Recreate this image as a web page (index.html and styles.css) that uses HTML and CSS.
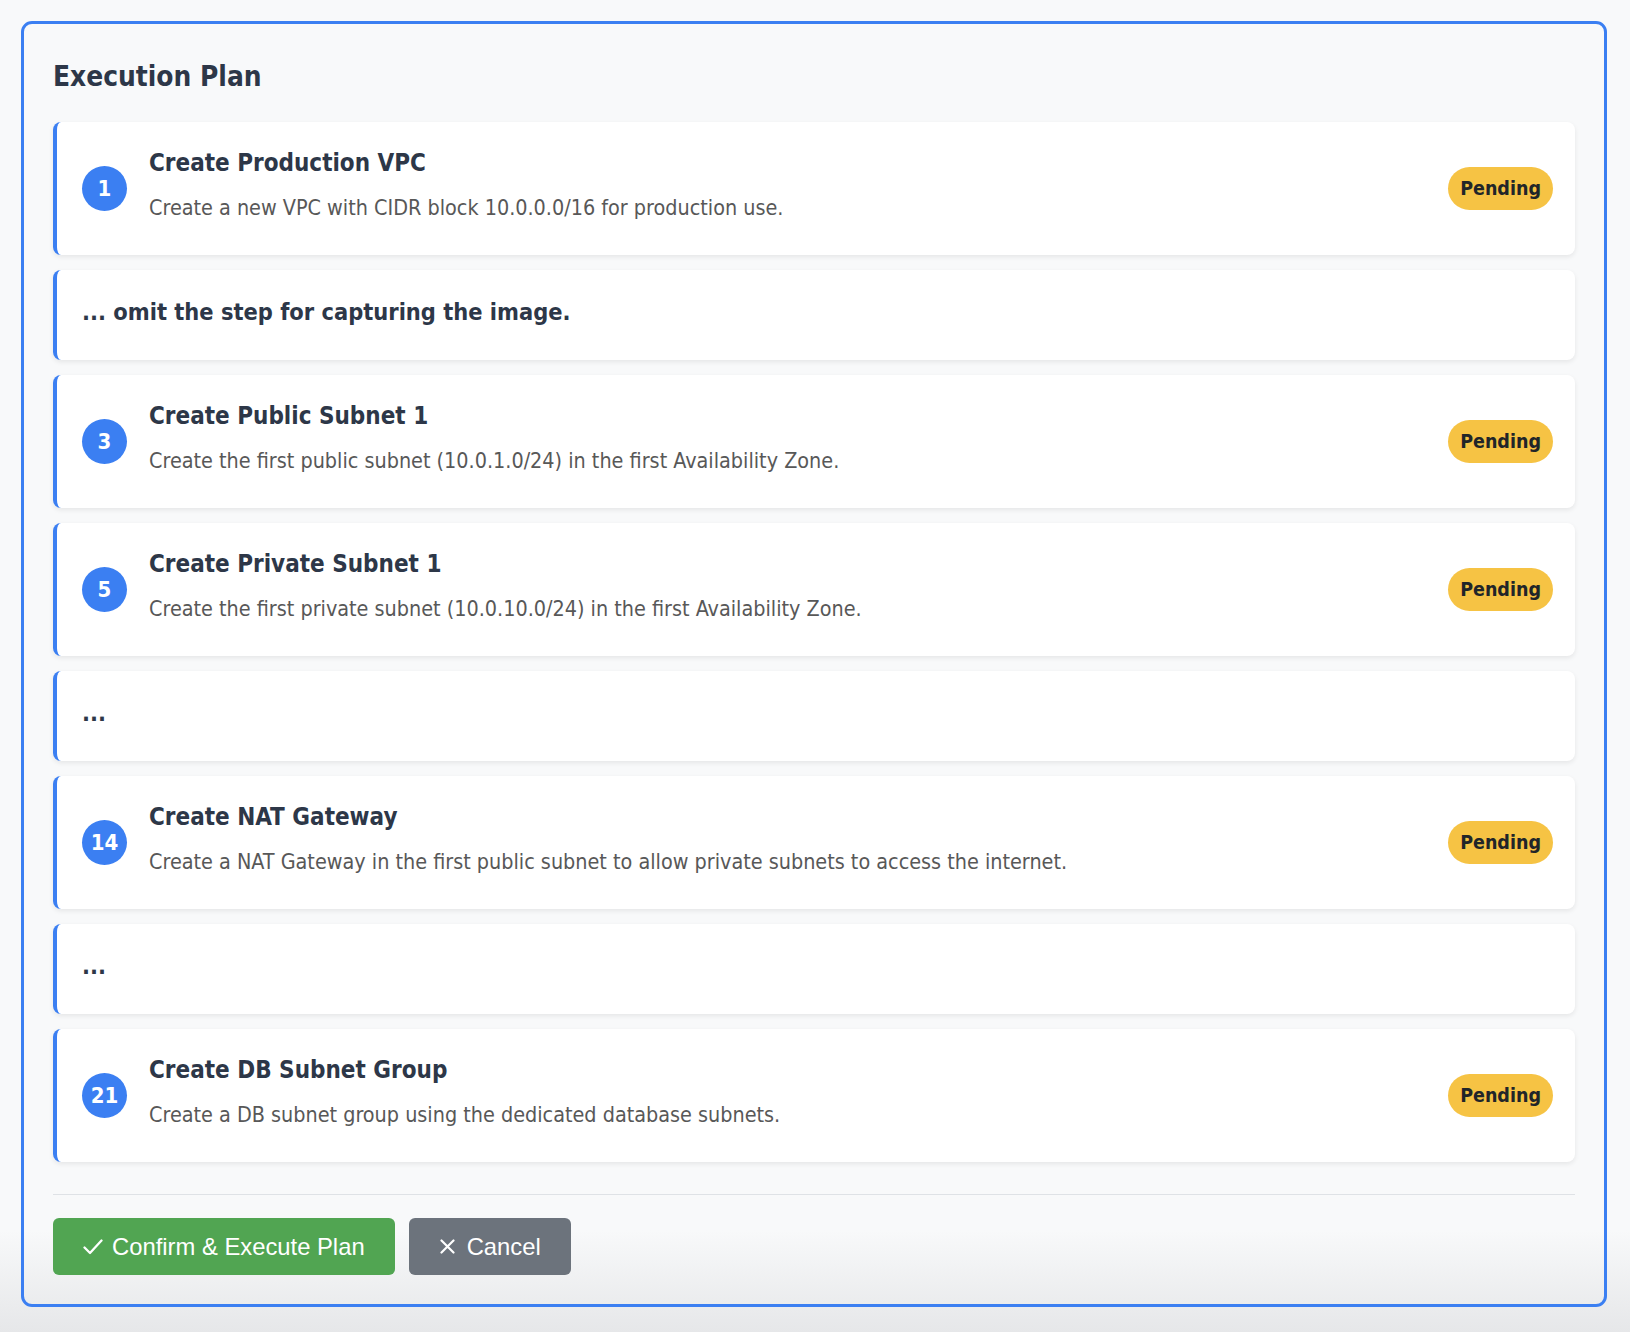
FILE: index.html
```html
<!DOCTYPE html>
<html lang="en">
<head>
<meta charset="utf-8">
<title>Execution Plan</title>
<link rel="stylesheet" href="styles.css">
</head>
<body>
<div class="plan">
  <h2 class="plan-title">Execution Plan</h2>
  <div class="steps">
    <div class="step">
      <div class="step-num">1</div>
      <div class="step-body">
        <div class="step-title">Create Production VPC</div>
        <div class="step-desc">Create a new VPC with CIDR block 10.0.0.0/16 for production use.</div>
      </div>
      <span class="badge">Pending</span>
    </div>
    <div class="step step-note">... omit the step for capturing the image.</div>
    <div class="step">
      <div class="step-num">3</div>
      <div class="step-body">
        <div class="step-title">Create Public Subnet 1</div>
        <div class="step-desc">Create the first public subnet (10.0.1.0/24) in the first Availability Zone.</div>
      </div>
      <span class="badge">Pending</span>
    </div>
    <div class="step">
      <div class="step-num">5</div>
      <div class="step-body">
        <div class="step-title">Create Private Subnet 1</div>
        <div class="step-desc">Create the first private subnet (10.0.10.0/24) in the first Availability Zone.</div>
      </div>
      <span class="badge">Pending</span>
    </div>
    <div class="step step-note">...</div>
    <div class="step">
      <div class="step-num">14</div>
      <div class="step-body">
        <div class="step-title">Create NAT Gateway</div>
        <div class="step-desc">Create a NAT Gateway in the first public subnet to allow private subnets to access the internet.</div>
      </div>
      <span class="badge">Pending</span>
    </div>
    <div class="step step-note">...</div>
    <div class="step">
      <div class="step-num">21</div>
      <div class="step-body">
        <div class="step-title">Create DB Subnet Group</div>
        <div class="step-desc">Create a DB subnet group using the dedicated database subnets.</div>
      </div>
      <span class="badge">Pending</span>
    </div>
  </div>
  <div class="actions">
    <button class="btn btn-confirm"><svg class="ico" width="20" height="16" viewBox="0 0 20 16"><path d="M1.5 8.5 L7 14 L18.5 1.5" fill="none" stroke="#fff" stroke-width="2.3" stroke-linecap="round" stroke-linejoin="round"/></svg>Confirm &amp; Execute Plan</button>
    <button class="btn btn-cancel"><svg class="ico ico-x" width="15" height="15" viewBox="0 0 15 15"><path d="M1.5 1.5 L13.5 13.5 M13.5 1.5 L1.5 13.5" fill="none" stroke="#fff" stroke-width="2.2" stroke-linecap="round"/></svg>Cancel</button>
  </div>
</div>
</body>
</html>
```
FILE: styles.css
```css
html, body {
  margin: 0;
  padding: 0;
}
body {
  min-height: 1332px;
  background: linear-gradient(to bottom, #f8f9fa 0, #f8f9fa 1230px, #e6e7e9 1332px);
  font-family: "DejaVu Sans Condensed", "DejaVu Sans", sans-serif;
  font-stretch: condensed;
  padding: 21px 23px 0 21px;
  box-sizing: border-box;
}
.plan {
  border: 3px solid #3b7ff2;
  border-radius: 11px;
  padding: 29px;
  height: 1286px;
  box-sizing: border-box;
}
.plan-title {
  margin: 8px 0 30px;
  font-size: 27.8px;
  line-height: 31px;
  font-weight: bold;
  color: #2d3748;
}
.steps {
  display: flex;
  flex-direction: column;
  gap: 15px;
}
.step {
  display: flex;
  align-items: center;
  background: #fff;
  border-left: 4px solid #3b7ff2;
  border-radius: 8px;
  box-shadow: 0 2px 5px rgba(0, 0, 0, 0.08);
  padding: 0 22px 0 25px;
  height: 133px;
  box-sizing: border-box;
}
.step-num {
  flex: none;
  width: 45px;
  height: 45px;
  border-radius: 50%;
  background: #3b7ff2;
  color: #fff;
  font-weight: bold;
  font-size: 22px;
  display: flex;
  align-items: center;
  justify-content: center;
  margin-right: 22px;
}
.step-body {
  flex: 1;
  padding-bottom: 6px;
}
.step-title {
  font-size: 24px;
  line-height: 30px;
  font-weight: bold;
  color: #2d3748;
}
.step-desc {
  margin-top: 15px;
  font-size: 21.4px;
  line-height: 30px;
  color: #585858;
}
.badge {
  flex: none;
  background: #f6c344;
  color: #212529;
  font-weight: bold;
  font-size: 19.5px;
  line-height: 43px;
  height: 43px;
  padding: 0 12px;
  border-radius: 22px;
}
.step-note {
  height: 90px;
  padding-bottom: 6px;
  font-size: 23.4px;
  line-height: 30px;
  font-weight: bold;
  color: #2d3748;
}
.actions {
  margin-top: 32px;
  border-top: 1px solid #dfe2e6;
  padding-top: 23px;
  display: flex;
  gap: 14px;
}
.btn {
  display: flex;
  align-items: center;
  white-space: nowrap;
  height: 57px;
  border: none;
  border-radius: 6px;
  padding: 0 30px;
  font-family: "Liberation Sans", Arial, sans-serif;
  font-size: 23.8px;
  color: #fff;
}
.btn-confirm {
  background: #51a552;
}
.btn-cancel {
  background: #6c737c;
  padding: 0 30px 0 31px;
}
.ico {
  flex: none;
  margin-right: 9px;
}
.ico-x {
  margin-right: 12px;
}
```
